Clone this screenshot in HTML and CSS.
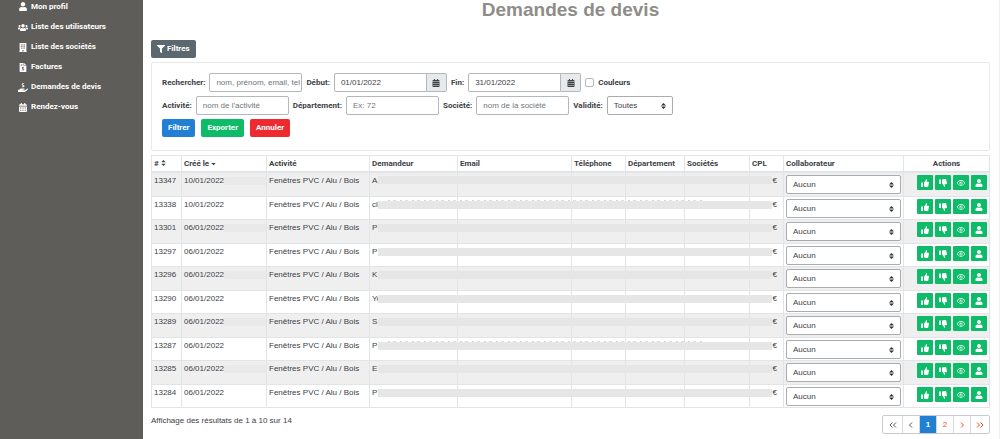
FILE: index.html
```html
<!DOCTYPE html>
<html lang="fr">
<head>
<meta charset="utf-8">
<title>Demandes de devis</title>
<link rel="stylesheet" href="styles.css">
</head>
<body>
<svg class="sprite" aria-hidden="true">
  <symbol id="user" viewBox="0 0 448 512"><path d="M224 256c70.700 0 128-57.300 128-128S294.700 0 224 0 96 57.300 96 128s57.300 128 128 128zm89.600 32h-16.700a174 174 0 0 1-145.800 0h-16.700C60.200 288 0 348.200 0 422.400V464c0 26.500 21.500 48 48 48h352c26.500 0 48-21.500 48-48v-41.600c0-74.200-60.200-134.400-134.400-134.400z"/></symbol>
  <symbol id="users" viewBox="0 0 640 512"><path d="M96 224a64 64 0 1 0 0-128 64 64 0 0 0 0 128zm448 0a64 64 0 1 0 0-128 64 64 0 0 0 0 128zm32 32h-64c-17.600 0-33.500 7.100-45.100 18.600 40.300 22.100 68.900 62 75.100 109.400h66c17.700 0 32-14.300 32-32v-32c0-35.300-28.700-64-64-64zm-256 0a112 112 0 1 0 0-224 112 112 0 0 0 0 224zm76.800 32h-8.300a154 154 0 0 1-137 0h-8.300C179.600 288 128 339.600 128 403.200V432c0 26.500 21.500 48 48 48h288c26.500 0 48-21.500 48-48v-28.800c0-63.600-51.600-115.200-115.200-115.200zM173.100 274.600C161.500 263.100 145.600 256 128 256H64c-35.300 0-64 28.700-64 64v32c0 17.700 14.300 32 32 32h65.900c6.300-47.400 34.900-87.300 75.200-109.400z"/></symbol>
  <symbol id="building" viewBox="0 0 448 512"><path fill-rule="evenodd" d="M436 480h-20V24c0-13.300-10.700-24-24-24H56C42.700 0 32 10.700 32 24v456H12c-7 0-12 5-12 12v20h448v-20c0-7-5-12-12-12zM128 76h64v64h-64zm0 96h64v64h-64zm0 96h64v64h-64zm128 212h-64v-84h64zm64-148h-64v-64h64zm0-96h-64v-64h64zm0-96h-64V76h64z"/></symbol>
  <symbol id="invoice" viewBox="0 0 384 512"><path fill-rule="evenodd" d="M256 0v128h128L256 0zM224 0H24C10.700 0 0 10.700 0 24v464c0 13.300 10.700 24 24 24h336c13.300 0 24-10.700 24-24V160H248c-13 0-24-11-24-24zM64 64h96v32H64zm0 64h96v32H64zm112 80h32v26c17 1 31 7 43 16l-22 25c-18-13-62-17-62 4 0 26 99 13 99 79 0 31-22 53-58 59v27h-32v-27c-20-2-37-9-50-20l22-25c25 20 77 18 77-7 0-30-99-13-99-80 0-30 20-50 50-55z"/></symbol>
  <symbol id="hand" viewBox="0 0 576 512"><path d="M565 328c-12-11-30-10-43 0l-92 74c-12 9-26 14-40 14H272c-21 0-21-32 0-32h78c16 0 31-11 34-27 3-20-13-37-32-37H192c-27 0-53 9-74 26l-47 38H16c-9 0-16 7-16 16v96c0 9 7 16 16 16h357c14 0 28-5 40-14l151-121c15-12 16-35 1-49zM270 0h36v26c20 2 36 8 49 18l-24 30c-22-17-69-18-69 4 0 31 111 16 111 88 0 34-25 58-67 64v26h-36v-26c-25-3-45-11-60-25l25-29c28 24 86 22 86-7 0-34-110-16-110-90 0-29 21-49 59-54z"/></symbol>
  <symbol id="calendar" viewBox="0 0 448 512"><path fill-rule="evenodd" d="M0 464c0 26.500 21.500 48 48 48h352c26.500 0 48-21.500 48-48V192H0zm320-208h64v56h-64zm0 128h64v56h-64zM192 256h64v56h-64zm0 128h64v56h-64zM64 256h64v56H64zm0 128h64v56H64zM400 64h-48V16c0-9-7-16-16-16h-32c-9 0-16 7-16 16v48H160V16c0-9-7-16-16-16h-32c-9 0-16 7-16 16v48H48C21.500 64 0 85.500 0 112v48h448v-48c0-26.500-21.500-48-48-48z"/></symbol>
  <symbol id="filter" viewBox="0 0 512 512"><path d="M488 0H24C3 0-8 26 7 41l185 185v206c0 8 4 15 10 20l80 55c16 11 38 0 38-19V226L505 41c15-15 4-41-17-41z"/></symbol>
  <symbol id="up" viewBox="0 0 512 512"><path d="M104 224H24c-13 0-24 11-24 24v240c0 13 11 24 24 24h80c13 0 24-11 24-24V248c0-13-11-24-24-24zM384 81c0 43-26 66-33 95h101c34 0 60 28 60 59 0 19-8 38-20 51 10 23 8 55-9 78 8 25 0 56-16 73 4 17 2 32-6 43-19 28-67 32-107 32-66 0-103-25-146-34-9-2-16-10-16-20V239c0-6 3-12 8-17 40-39 56-81 88-113 14-14 20-36 25-57C317 34 327 0 347 0c24 0 37 40 37 81z"/></symbol>
  <symbol id="down" viewBox="0 0 512 512"><path d="M0 56v240c0 13 11 24 24 24h80c13 0 24-11 24-24V56c0-13-11-24-24-24H24C11 32 0 43 0 56zM384 431c0-43-26-66-33-95h101c34 0 60-28 60-59 0-19-8-38-20-51 10-23 8-55-9-78 8-25 0-56-16-73 4-17 2-32-6-43C442 4 394 0 354 0c-66 0-103 25-146 34-9 2-16 10-16 20v219c0 6 3 12 8 17 40 39 56 81 88 113 14 14 20 36 25 57 4 18 14 52 34 52 24 0 37-40 37-81z"/></symbol>
  <symbol id="eye" viewBox="0 0 576 512"><path fill-rule="evenodd" d="M569 231C512 121 401 48 288 48S64 121 7 231c-9 16-9 34 0 50 57 110 168 183 281 183s224-73 281-183c9-16 9-34 0-50zM288 416c-96 0-187-60-240-160C101 156 192 96 288 96s187 60 240 160c-53 100-144 160-240 160zm0-272a112 112 0 1 0 0 224 112 112 0 0 0 0-224zm0 176a64 64 0 0 1-64-64c0-10 3-20 7-29a40 40 0 1 0 34-31c7-3 15-4 23-4a64 64 0 0 1 0 128z"/></symbol>
</svg>
<div class="layout">
  <nav class="sidebar">
    <a href="#"><svg><use href="#user"/></svg>Mon profil</a>
    <a href="#"><svg><use href="#users"/></svg>Liste des utilisateurs</a>
    <a href="#"><svg><use href="#building"/></svg>Liste des sociétés</a>
    <a href="#"><svg><use href="#invoice"/></svg>Factures</a>
    <a href="#"><svg><use href="#hand"/></svg>Demandes de devis</a>
    <a href="#"><svg><use href="#calendar"/></svg>Rendez-vous</a>
  </nav>
  <main class="content">
    <h1>Demandes de devis</h1>
    <button type="button" class="btn btn-toggle"><svg><use href="#filter"/></svg>Filtres</button>
    <form class="filters">
      <div class="line">
        <label for="q">Rechercher:</label><input id="q" class="field" type="text" placeholder="nom, prénom, email, tel">
        <label for="start">Début:</label><div class="group"><input id="start" class="field" type="text" value="01/01/2022"><button type="button" aria-label="Choisir la date de début"><svg><use href="#calendar"/></svg></button></div>
        <label for="end">Fin:</label><div class="group"><input id="end" class="field" type="text" value="31/01/2022"><button type="button" aria-label="Choisir la date de fin"><svg><use href="#calendar"/></svg></button></div>
        <input id="colors" class="check" type="checkbox"><label for="colors">Couleurs</label>
      </div>
      <div class="line">
        <label for="act">Activité:</label><input id="act" class="field" type="text" placeholder="nom de l'activité">
        <label for="dep">Département:</label><input id="dep" class="field" type="text" placeholder="Ex: 72">
        <label for="soc">Société:</label><input id="soc" class="field" type="text" placeholder="nom de la société">
        <label for="val">Validité:</label><select id="val" class="select select-short"><option>Toutes</option></select>
      </div>
      <div class="line buttons">
        <button type="button" class="btn btn-blue">Filtrer</button>
        <button type="button" class="btn btn-green">Exporter</button>
        <button type="button" class="btn btn-red">Annuler</button>
      </div>
    </form>
    <table class="quotes">
      <colgroup><col class="c-id"><col class="c-date"><col class="c-act"><col class="c-dem"><col class="c-mail"><col class="c-tel"><col class="c-dep"><col class="c-soc"><col class="c-cpl"><col class="c-col"><col class="c-actions"></colgroup>
      <thead>
        <tr><th># <svg class="sort" viewBox="0 0 6 8"><path d="M3 0 6 3H0zM0 5h6L3 8z"/></svg></th><th>Créé le <svg class="sort" viewBox="0 0 6 8"><path d="M0 4h6L3 7z"/></svg></th><th>Activité</th><th>Demandeur</th><th>Email</th><th>Téléphone</th><th>Département</th><th>Sociétés</th><th>CPL</th><th>Collaborateur</th><th class="center">Actions</th></tr>
      </thead>
      <tbody>
        <tr><td>13347</td><td>10/01/2022</td><td>Fenêtres PVC / Alu / Bois</td><td>A<span class="mask"></span></td><td></td><td></td><td></td><td></td><td class="right">€</td><td><select class="select" aria-label="Collaborateur 13347"><option>Aucun</option></select></td><td><div class="actions"><button aria-label="Valider"><svg><use href="#up"/></svg></button><button aria-label="Refuser"><svg><use href="#down"/></svg></button><button aria-label="Voir"><svg><use href="#eye"/></svg></button><button aria-label="Profil"><svg><use href="#user"/></svg></button></div></td></tr>
        <tr class="traced"><td>13338</td><td>10/01/2022</td><td>Fenêtres PVC / Alu / Bois</td><td>cl<span class="mask"></span></td><td></td><td></td><td></td><td></td><td class="right">€</td><td><select class="select" aria-label="Collaborateur 13338"><option>Aucun</option></select></td><td><div class="actions"><button aria-label="Valider"><svg><use href="#up"/></svg></button><button aria-label="Refuser"><svg><use href="#down"/></svg></button><button aria-label="Voir"><svg><use href="#eye"/></svg></button><button aria-label="Profil"><svg><use href="#user"/></svg></button></div></td></tr>
        <tr><td>13301</td><td>06/01/2022</td><td>Fenêtres PVC / Alu / Bois</td><td>P<span class="mask"></span></td><td></td><td></td><td></td><td></td><td class="right">€</td><td><select class="select" aria-label="Collaborateur 13301"><option>Aucun</option></select></td><td><div class="actions"><button aria-label="Valider"><svg><use href="#up"/></svg></button><button aria-label="Refuser"><svg><use href="#down"/></svg></button><button aria-label="Voir"><svg><use href="#eye"/></svg></button><button aria-label="Profil"><svg><use href="#user"/></svg></button></div></td></tr>
        <tr><td>13297</td><td>06/01/2022</td><td>Fenêtres PVC / Alu / Bois</td><td>P<span class="mask"></span></td><td></td><td></td><td></td><td></td><td class="right">€</td><td><select class="select" aria-label="Collaborateur 13297"><option>Aucun</option></select></td><td><div class="actions"><button aria-label="Valider"><svg><use href="#up"/></svg></button><button aria-label="Refuser"><svg><use href="#down"/></svg></button><button aria-label="Voir"><svg><use href="#eye"/></svg></button><button aria-label="Profil"><svg><use href="#user"/></svg></button></div></td></tr>
        <tr><td>13296</td><td>06/01/2022</td><td>Fenêtres PVC / Alu / Bois</td><td>K<span class="mask"></span></td><td></td><td></td><td></td><td></td><td class="right">€</td><td><select class="select" aria-label="Collaborateur 13296"><option>Aucun</option></select></td><td><div class="actions"><button aria-label="Valider"><svg><use href="#up"/></svg></button><button aria-label="Refuser"><svg><use href="#down"/></svg></button><button aria-label="Voir"><svg><use href="#eye"/></svg></button><button aria-label="Profil"><svg><use href="#user"/></svg></button></div></td></tr>
        <tr><td>13290</td><td>06/01/2022</td><td>Fenêtres PVC / Alu / Bois</td><td>Yo<span class="mask"></span></td><td></td><td></td><td></td><td></td><td class="right">€</td><td><select class="select" aria-label="Collaborateur 13290"><option>Aucun</option></select></td><td><div class="actions"><button aria-label="Valider"><svg><use href="#up"/></svg></button><button aria-label="Refuser"><svg><use href="#down"/></svg></button><button aria-label="Voir"><svg><use href="#eye"/></svg></button><button aria-label="Profil"><svg><use href="#user"/></svg></button></div></td></tr>
        <tr><td>13289</td><td>06/01/2022</td><td>Fenêtres PVC / Alu / Bois</td><td>S<span class="mask"></span></td><td></td><td></td><td></td><td></td><td class="right">€</td><td><select class="select" aria-label="Collaborateur 13289"><option>Aucun</option></select></td><td><div class="actions"><button aria-label="Valider"><svg><use href="#up"/></svg></button><button aria-label="Refuser"><svg><use href="#down"/></svg></button><button aria-label="Voir"><svg><use href="#eye"/></svg></button><button aria-label="Profil"><svg><use href="#user"/></svg></button></div></td></tr>
        <tr class="traced"><td>13287</td><td>06/01/2022</td><td>Fenêtres PVC / Alu / Bois</td><td>P<span class="mask"></span></td><td></td><td></td><td></td><td></td><td class="right">€</td><td><select class="select" aria-label="Collaborateur 13287"><option>Aucun</option></select></td><td><div class="actions"><button aria-label="Valider"><svg><use href="#up"/></svg></button><button aria-label="Refuser"><svg><use href="#down"/></svg></button><button aria-label="Voir"><svg><use href="#eye"/></svg></button><button aria-label="Profil"><svg><use href="#user"/></svg></button></div></td></tr>
        <tr><td>13285</td><td>06/01/2022</td><td>Fenêtres PVC / Alu / Bois</td><td>E<span class="mask"></span></td><td></td><td></td><td></td><td></td><td class="right">€</td><td><select class="select" aria-label="Collaborateur 13285"><option>Aucun</option></select></td><td><div class="actions"><button aria-label="Valider"><svg><use href="#up"/></svg></button><button aria-label="Refuser"><svg><use href="#down"/></svg></button><button aria-label="Voir"><svg><use href="#eye"/></svg></button><button aria-label="Profil"><svg><use href="#user"/></svg></button></div></td></tr>
        <tr><td>13284</td><td>06/01/2022</td><td>Fenêtres PVC / Alu / Bois</td><td>P<span class="mask"></span></td><td></td><td></td><td></td><td></td><td class="right">€</td><td><select class="select" aria-label="Collaborateur 13284"><option>Aucun</option></select></td><td><div class="actions"><button aria-label="Valider"><svg><use href="#up"/></svg></button><button aria-label="Refuser"><svg><use href="#down"/></svg></button><button aria-label="Voir"><svg><use href="#eye"/></svg></button><button aria-label="Profil"><svg><use href="#user"/></svg></button></div></td></tr>
      </tbody>
    </table>
    <footer class="footer">
      <p>Affichage des résultats de 1 à 10 sur 14</p>
      <nav class="pages" aria-label="Pagination">
        <a href="#" class="muted wide" aria-label="Première page"><svg viewBox="0 0 8 8"><path d="M3.500 1.500 1 4l2.500 2.500M7 1.500 4.500 4 7 6.500"/></svg></a>
        <a href="#" class="muted" aria-label="Page précédente"><svg viewBox="0 0 8 8"><path d="M5 1.500 2.500 4 5 6.500"/></svg></a>
        <a href="#" class="current" aria-current="page">1</a>
        <a href="#">2</a>
        <a href="#" aria-label="Page suivante"><svg viewBox="0 0 8 8"><path d="M3 1.500 5.500 4 3 6.500"/></svg></a>
        <a href="#" class="wide" aria-label="Dernière page"><svg viewBox="0 0 8 8"><path d="M1 1.500 3.500 4 1 6.500M4.500 1.500 7 4 4.500 6.500"/></svg></a>
      </nav>
    </footer>
  </main>
</div>
</body>
</html>
```
FILE: styles.css
```css
* { box-sizing: border-box; }
body {
  margin: 0;
  background: #fff;
  color: #3c4146;
  font: 8px/12px "Liberation Sans", Arial, sans-serif;
}
button, input, select { font: inherit; color: inherit; margin: 0; }
button { cursor: pointer; }
a { text-decoration: none; }
svg { fill: currentColor; width: 8px; height: 8px; flex: none; }
.sprite { position: absolute; width: 0; height: 0; }
.sidebar a, .btn, .line label, .quotes th {
  font-family: Roboto, "Liberation Sans", sans-serif;
  font-weight: 700;
}

.layout { display: flex; min-height: 100vh; }
.sidebar {
  flex: none;
  width: 143px;
  padding-left: 18px;
  background: #5f5d5a;
}
.sidebar a {
  display: flex;
  align-items: center;
  gap: 3px;
  height: 20px;
  color: #fff;
}
.sidebar a:first-child { height: 17px; padding-bottom: 4px; }
.sidebar svg { width: 10px; height: 9px; }

.content {
  flex: 1;
  min-width: 0;
  padding: 0 9px 0 8px;
  border-right: 1px solid #f0f0f0;
}
h1 {
  margin: 0 0 20px;
  text-align: center;
  color: #8f8d89;
  font: bold 19px/20px "Liberation Sans", sans-serif;
}

.btn {
  display: flex;
  align-items: center;
  gap: 2px;
  height: 18px;
  padding: 0 6px;
  border: 0;
  border-radius: 2px;
  color: #fff;
}
.btn-toggle { background: #5c686f; }
.btn-blue { background: #2180d3; }
.btn-green { background: #0dbb68; }
.btn-red { background: #ee2a31; }

.filters {
  display: flex;
  flex-direction: column;
  gap: 4px;
  margin: 4px 0;
  padding: 10px 10px 13px;
  border: 1px solid #e8e9ea;
  border-radius: 2px;
}
.line { display: flex; align-items: center; gap: 4px; }
.buttons { gap: 6px; }
.field {
  width: 93px;
  height: 19px;
  padding: 0 1px 0 6px;
  border: 1px solid #b5b8bb;
  border-radius: 2px;
  background: #fff;
}
.field::placeholder { color: #70777d; opacity: 1; }
.group { display: flex; }
.group .field { border-radius: 2px 0 0 2px; }
.group button {
  display: flex;
  align-items: center;
  justify-content: center;
  width: 20px;
  padding: 0;
  border: 1px solid #b5b8bb;
  border-left: 0;
  border-radius: 0 2px 2px 0;
  background: #e6eaed;
}
.check {
  appearance: none;
  width: 9px;
  height: 9px;
  border: 1px solid #b5b8bb;
  border-radius: 2px;
  background: #fff;
}
.select {
  appearance: none;
  display: block;
  width: 100%;
  height: 19px;
  padding: 0 6px;
  border: 1px solid #a9adb0;
  border-radius: 2px;
  background: #fff url("data:image/svg+xml,%3Csvg xmlns='http://www.w3.org/2000/svg' viewBox='0 0 5 6'%3E%3Cpath fill='%23333' d='M2.500 0 0 2.500h5zM2.500 6 0 3.500h5z'/%3E%3C/svg%3E") no-repeat right 6px center / 5px 6px;
}
.select-short { width: 66px; }

.quotes {
  width: 100%;
  table-layout: fixed;
  border-collapse: collapse;
}
.c-id { width: 30px; }
.c-date { width: 85px; }
.c-act { width: 103px; }
.c-dem { width: 88px; }
.c-tel { width: 54px; }
.c-dep { width: 59px; }
.c-soc { width: 65px; }
.c-cpl { width: 34px; }
.c-col { width: 120px; }
.c-actions { width: 86px; }
.quotes th, .quotes td {
  border: 1px solid #e1e5e8;
  padding: 2px;
  text-align: left;
  vertical-align: top;
  white-space: nowrap;
}
.quotes th { height: 16px; border-bottom: 2px solid #e1e5e8; line-height: 11px; }
.quotes .sort { width: 5px; height: 6px; }
.quotes .center { text-align: center; }
.quotes .right { text-align: right; padding-right: 6px; }
.quotes tbody tr { position: relative; }
.quotes tbody tr:nth-child(odd) { background: #efefef; }
.quotes tbody tr:nth-child(even) td { padding-bottom: 1px; }
.quotes tbody tr:nth-child(odd) td:nth-child(2) {
  background: linear-gradient(#e9e9e9, #e9e9e9) no-repeat right 4px / 42px 8px;
}
.quotes tbody td { line-height: 11px; }
.mask {
  position: absolute;
  top: 4px;
  left: 226px;
  right: 218px;
  height: 8px;
  background: #e6e6e6;
}
.traced .mask::before {
  content: "";
  position: absolute;
  inset: -1px 70px auto 10px;
  height: 1px;
  background: repeating-linear-gradient(90deg, #d6d6d6 0 2px, transparent 2px 5px, #dedede 5px 8px, transparent 8px 12px);
}
.actions { display: flex; justify-content: flex-end; gap: 2px; }
.actions button {
  display: flex;
  align-items: center;
  justify-content: center;
  width: 16px;
  height: 15px;
  padding: 0;
  border: 0;
  border-radius: 1px;
  background: #0dbb68;
  color: #fff;
}

.footer { display: flex; align-items: flex-start; justify-content: space-between; padding-top: 7px; }
.footer p { margin: 0; }
.pages { display: flex; border: 1px solid #c9cccf; border-radius: 2px; }
.pages a {
  display: flex;
  align-items: center;
  justify-content: center;
  width: 17px;
  height: 17px;
  color: #f4511e;
}
.pages a + a { border-left: 1px solid #d5d8da; }
.pages .wide { width: 19px; }
.pages .muted { color: #555b60; }
.pages .current { background: #2180d3; color: #fff; font-weight: 700; }
.pages svg { fill: none; stroke: currentColor; }
```
